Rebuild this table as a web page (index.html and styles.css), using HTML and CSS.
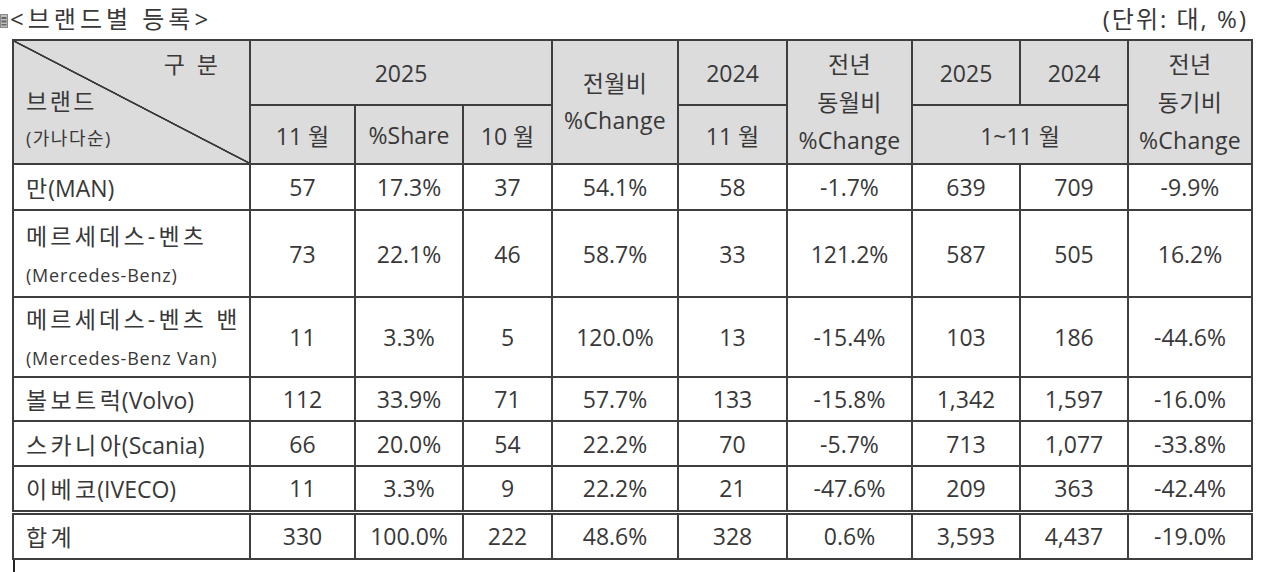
FILE: index.html
```html
<!DOCTYPE html>
<html lang="ko">
<head>
<meta charset="utf-8">
<title>브랜드별 등록</title>
<link rel="stylesheet" href="styles.css">
</head>
<body>
<div class="page">
  <div class="topbar">
    <div class="title">
      <svg class="handle" width="8" height="14" viewBox="0 0 8 14"><rect x="0" y="0" width="8" height="14" fill="#8a8a8a"/><rect x="1" y="1" width="6" height="12" fill="#bdbdbd"/><rect x="1.5" y="3" width="5" height="2" fill="#666"/><rect x="1.5" y="6.5" width="5" height="2" fill="#666"/><rect x="1.5" y="10" width="5" height="1.5" fill="#666"/></svg>
      <span>&lt;브랜드별 등록&gt;</span>
    </div>
    <div class="unit">(단위: 대, %)</div>
  </div>
  <table class="reg">
    <colgroup>
      <col style="width:237px"><col style="width:105px"><col style="width:108px"><col style="width:89px"><col style="width:126px"><col style="width:109px"><col style="width:125px"><col style="width:108px"><col style="width:108px"><col style="width:124px">
    </colgroup>
    <thead>
      <tr class="h1">
        <th rowspan="2" class="corner">
          <div class="corner-in">
            <span class="gubun">구 분</span>
            <span class="brand">브랜드</span>
            <span class="order">(가나다순)</span>
          </div>
        </th>
        <th colspan="3">2025</th>
        <th rowspan="2" class="two">전월비<br>%Change</th>
        <th>2024</th>
        <th rowspan="2" class="three">전년<br>동월비<br>%Change</th>
        <th>2025</th>
        <th>2024</th>
        <th rowspan="2" class="three">전년<br>동기비<br>%Change</th>
      </tr>
      <tr class="h2">
        <th>11 월</th>
        <th>%Share</th>
        <th>10 월</th>
        <th>11 월</th>
        <th colspan="2">1~11 월</th>
      </tr>
    </thead>
    <tbody>
      <tr class="r1"><td class="name"><span class="k">만</span>(MAN)</td><td>57</td><td>17.3%</td><td>37</td><td>54.1%</td><td>58</td><td>-1.7%</td><td>639</td><td>709</td><td>-9.9%</td></tr>
      <tr class="r2"><td class="name"><div class="ko">메르세데스-벤츠</div><div class="en">(Mercedes-Benz)</div></td><td>73</td><td>22.1%</td><td>46</td><td>58.7%</td><td>33</td><td>121.2%</td><td>587</td><td>505</td><td>16.2%</td></tr>
      <tr class="r3"><td class="name"><div class="ko">메르세데스-벤츠 밴</div><div class="en">(Mercedes-Benz Van)</div></td><td>11</td><td>3.3%</td><td>5</td><td>120.0%</td><td>13</td><td>-15.4%</td><td>103</td><td>186</td><td>-44.6%</td></tr>
      <tr class="r4"><td class="name"><span class="k">볼보트럭</span>(Volvo)</td><td>112</td><td>33.9%</td><td>71</td><td>57.7%</td><td>133</td><td>-15.8%</td><td>1,342</td><td>1,597</td><td>-16.0%</td></tr>
      <tr class="r5"><td class="name"><span class="k">스카니아</span>(Scania)</td><td>66</td><td>20.0%</td><td>54</td><td>22.2%</td><td>70</td><td>-5.7%</td><td>713</td><td>1,077</td><td>-33.8%</td></tr>
      <tr class="r6"><td class="name"><span class="k">이베코</span>(IVECO)</td><td>11</td><td>3.3%</td><td>9</td><td>22.2%</td><td>21</td><td>-47.6%</td><td>209</td><td>363</td><td>-42.4%</td></tr>
      <tr class="total"><td class="name"><span class="k">합계</span></td><td>330</td><td>100.0%</td><td>222</td><td>48.6%</td><td>328</td><td>0.6%</td><td>3,593</td><td>4,437</td><td>-19.0%</td></tr>
    </tbody>
  </table>
  <div class="cursor"></div>
</div>
</body>
</html>
```
FILE: styles.css
```css
html, body {
  margin: 0;
  padding: 0;
  background: #ffffff;
}
body {
  font-family: "Open Sans", "Noto Sans CJK KR", sans-serif;
  color: #383838;
  width: 1280px;
  height: 572px;
  overflow: hidden;
}
.page {
  position: relative;
  width: 1280px;
}
.topbar {
  display: flex;
  justify-content: space-between;
  align-items: flex-start;
  height: 39px;
  padding-right: 32px;
}
.title {
  display: flex;
  align-items: center;
  gap: 2px;
  font-size: 24px;
  line-height: 30px;
  margin-top: 4px;
  letter-spacing: 4px;
}
.handle {
  display: block;
  margin-top: 4px;
}
.unit {
  font-size: 24px;
  line-height: 30px;
  margin-top: 4px;
  letter-spacing: 2px;
}
.reg {
  margin-left: 12px;
  border-collapse: collapse;
  table-layout: fixed;
  width: 1239px;
  border: 2px solid #5a5a5a;
  font-size: 23px;
}
.reg th, .reg td {
  border: 2px solid #3e3e3e;
  padding: 0;
  text-align: center;
  vertical-align: middle;
  font-weight: normal;
  white-space: nowrap;
}
.reg th {
  background: #dcdcdc;
}
.reg tr.h1 { height: 65px; }
.reg tr.h2 { height: 59px; }
.reg th.two { line-height: 37px; letter-spacing: 0.3px; }
.reg th.three { line-height: 38px; letter-spacing: 0.3px; }
.reg th.corner {
  background: #dcdcdc linear-gradient(to top right, transparent calc(50% - 1.2px), #3a3a3a calc(50% - 0.6px), #3a3a3a calc(50% + 0.6px), transparent calc(50% + 1.2px));
  text-align: left;
}
.corner-in {
  display: flex;
  flex-direction: column;
  height: 122px;
  padding: 4px 0 0 12px;
  box-sizing: border-box;
}
.gubun {
  align-self: flex-end;
  margin-right: 28px;
  line-height: 38px;
  letter-spacing: 3px;
}
.brand {
  line-height: 40px;
  margin-top: -2px;
  letter-spacing: 2.5px;
}
.order {
  font-size: 18px;
  line-height: 34px;
  letter-spacing: 1.5px;
}
.reg tbody tr.r1 { height: 46px; }
.reg tbody tr.r2 { height: 87px; }
.reg tbody tr.r3 { height: 79px; }
.reg tbody tr.r4 { height: 44px; }
.reg tbody tr.r5 { height: 45px; }
.reg tbody tr.r6 { height: 46px; }
.reg tbody tr.total { height: 47px; }
.reg tbody tr.total td {
  border-top: 5px double #3e3e3e;
}
.reg td.name {
  text-align: left;
  padding-left: 12px;
}
.reg td .k {
  letter-spacing: 3.4px;
  margin-right: -2.4px;
}
.reg td .ko {
  line-height: 42px;
  letter-spacing: 3.2px;
}
.reg td .en {
  font-size: 18px;
  line-height: 36px;
  letter-spacing: 0.8px;
}
.cursor {
  width: 2px;
  height: 14px;
  background: #222;
  margin-left: 13px;
}
```
